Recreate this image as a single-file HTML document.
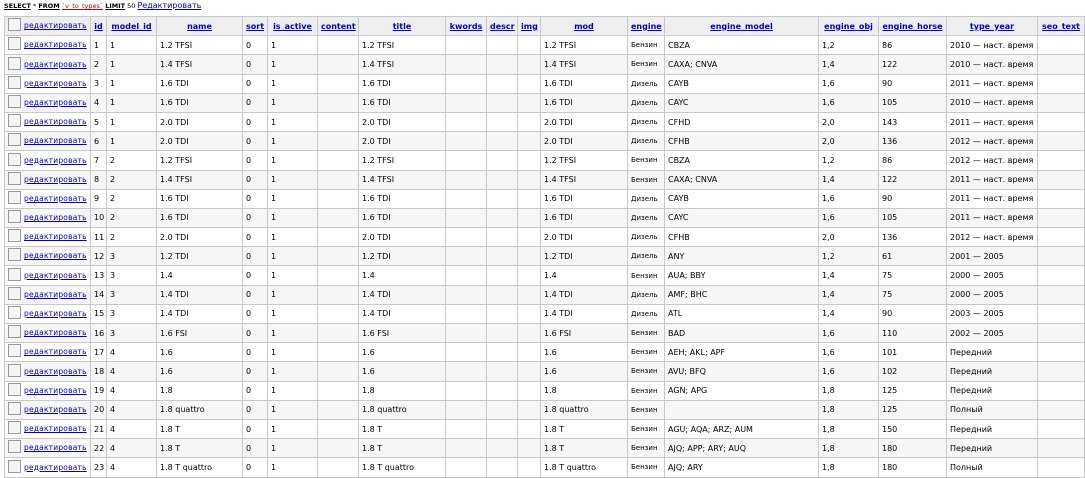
<!DOCTYPE html>
<html><head><meta charset="utf-8"><style>
body{margin:0;background:#fff;font-family:"DejaVu Sans","Liberation Sans",sans-serif;font-size:8px;color:#000}
.q{position:absolute;left:4px;top:1px;font-size:6.5px;white-space:nowrap}
.q b{text-decoration:underline}
.q .t{color:#c00;text-decoration:underline}
.q a{color:#00c;font-size:8px;text-decoration:underline}
table{position:absolute;left:4px;top:16px;border-collapse:collapse;table-layout:fixed;width:1080px}
td,th{border:1px solid #c8c8c8;height:18.2px;padding:0 3px;overflow:hidden;white-space:nowrap;text-align:left;font-weight:normal}
th{background:#eee;text-align:center;font-weight:bold}
th a,td a{color:#00c;text-decoration:underline}
#b tr:nth-child(even) td{background:#f6f6f6}
td.c,th.c{vertical-align:bottom;padding:0 1px;text-align:left;font-weight:normal}
.cb{display:inline-block;width:11px;height:11px;border:1px solid #999;background:#f4f4f4;vertical-align:top;margin:1px 3px 0 2px;position:relative;top:-4px}
td.c a,th.c a{font-size:7.5px;letter-spacing:0.2px}
</style></head><body>
<div class="q"><b>SELECT</b> * <b>FROM</b> <span class="t">`v_to_types`</span> <b>LIMIT</b> 50 <a>Редактировать</a></div>
<table>
<colgroup><col style="width:86px"><col style="width:16px"><col style="width:50px"><col style="width:86px"><col style="width:25px"><col style="width:50px"><col style="width:41px"><col style="width:87px"><col style="width:41px"><col style="width:31px"><col style="width:23px"><col style="width:87px"><col style="width:37px"><col style="width:154px"><col style="width:60px"><col style="width:68px"><col style="width:91px"><col style="width:47px"></colgroup>
<thead><tr><th class="c"><span class="cb"></span><a>редактировать</a></th><th><a>id</a></th><th><a>model_id</a></th><th><a>name</a></th><th><a>sort</a></th><th><a>is_active</a></th><th><a>content</a></th><th><a>title</a></th><th><a>kwords</a></th><th><a>descr</a></th><th><a>img</a></th><th><a>mod</a></th><th><a>engine</a></th><th><a>engine_model</a></th><th><a>engine_obj</a></th><th><a>engine_horse</a></th><th><a>type_year</a></th><th><a>seo_text</a></th></tr></thead>
<tbody id="b"></tbody>
</table>
<script>
var d=[
[1,1,"1.2 TFSI","Бензин","CBZA","1,2",86,"2010 — наст. время"],
[2,1,"1.4 TFSI","Бензин","CAXA; CNVA","1,4",122,"2010 — наст. время"],
[3,1,"1.6 TDI","Дизель","CAYB","1,6",90,"2011 — наст. время"],
[4,1,"1.6 TDI","Дизель","CAYC","1,6",105,"2010 — наст. время"],
[5,1,"2.0 TDI","Дизель","CFHD","2,0",143,"2011 — наст. время"],
[6,1,"2.0 TDI","Дизель","CFHB","2,0",136,"2012 — наст. время"],
[7,2,"1.2 TFSI","Бензин","CBZA","1,2",86,"2012 — наст. время"],
[8,2,"1.4 TFSI","Бензин","CAXA; CNVA","1,4",122,"2011 — наст. время"],
[9,2,"1.6 TDI","Дизель","CAYB","1,6",90,"2011 — наст. время"],
[10,2,"1.6 TDI","Дизель","CAYC","1,6",105,"2011 — наст. время"],
[11,2,"2.0 TDI","Дизель","CFHB","2,0",136,"2012 — наст. время"],
[12,3,"1.2 TDI","Дизель","ANY","1,2",61,"2001 — 2005"],
[13,3,"1.4","Бензин","AUA; BBY","1,4",75,"2000 — 2005"],
[14,3,"1.4 TDI","Дизель","AMF; BHC","1,4",75,"2000 — 2005"],
[15,3,"1.4 TDI","Дизель","ATL","1,4",90,"2003 — 2005"],
[16,3,"1.6 FSI","Бензин","BAD","1,6",110,"2002 — 2005"],
[17,4,"1.6","Бензин","AEH; AKL; APF","1,6",101,"Передний"],
[18,4,"1.6","Бензин","AVU; BFQ","1,6",102,"Передний"],
[19,4,"1.8","Бензин","AGN; APG","1,8",125,"Передний"],
[20,4,"1.8 quattro","Бензин","","1,8",125,"Полный"],
[21,4,"1.8 T","Бензин","AGU; AQA; ARZ; AUM","1,8",150,"Передний"],
[22,4,"1.8 T","Бензин","AJQ; APP; ARY; AUQ","1,8",180,"Передний"],
[23,4,"1.8 T quattro","Бензин","AJQ; ARY","1,8",180,"Полный"]];
var h="";d.forEach(function(r){h+='<tr><td class="c"><span class="cb"></span><a>редактировать</a></td><td>'+r[0]+'</td><td>'+r[1]+'</td><td>'+r[2]+'</td><td>0</td><td>1</td><td></td><td>'+r[2]+'</td><td></td><td></td><td></td><td>'+r[2]+'</td><td style="font-size:7px">'+r[3]+'</td><td>'+r[4]+'</td><td>'+r[5]+'</td><td>'+r[6]+'</td><td>'+r[7]+'</td><td></td></tr>'});
document.getElementById("b").innerHTML=h;
</script>
</body></html>
